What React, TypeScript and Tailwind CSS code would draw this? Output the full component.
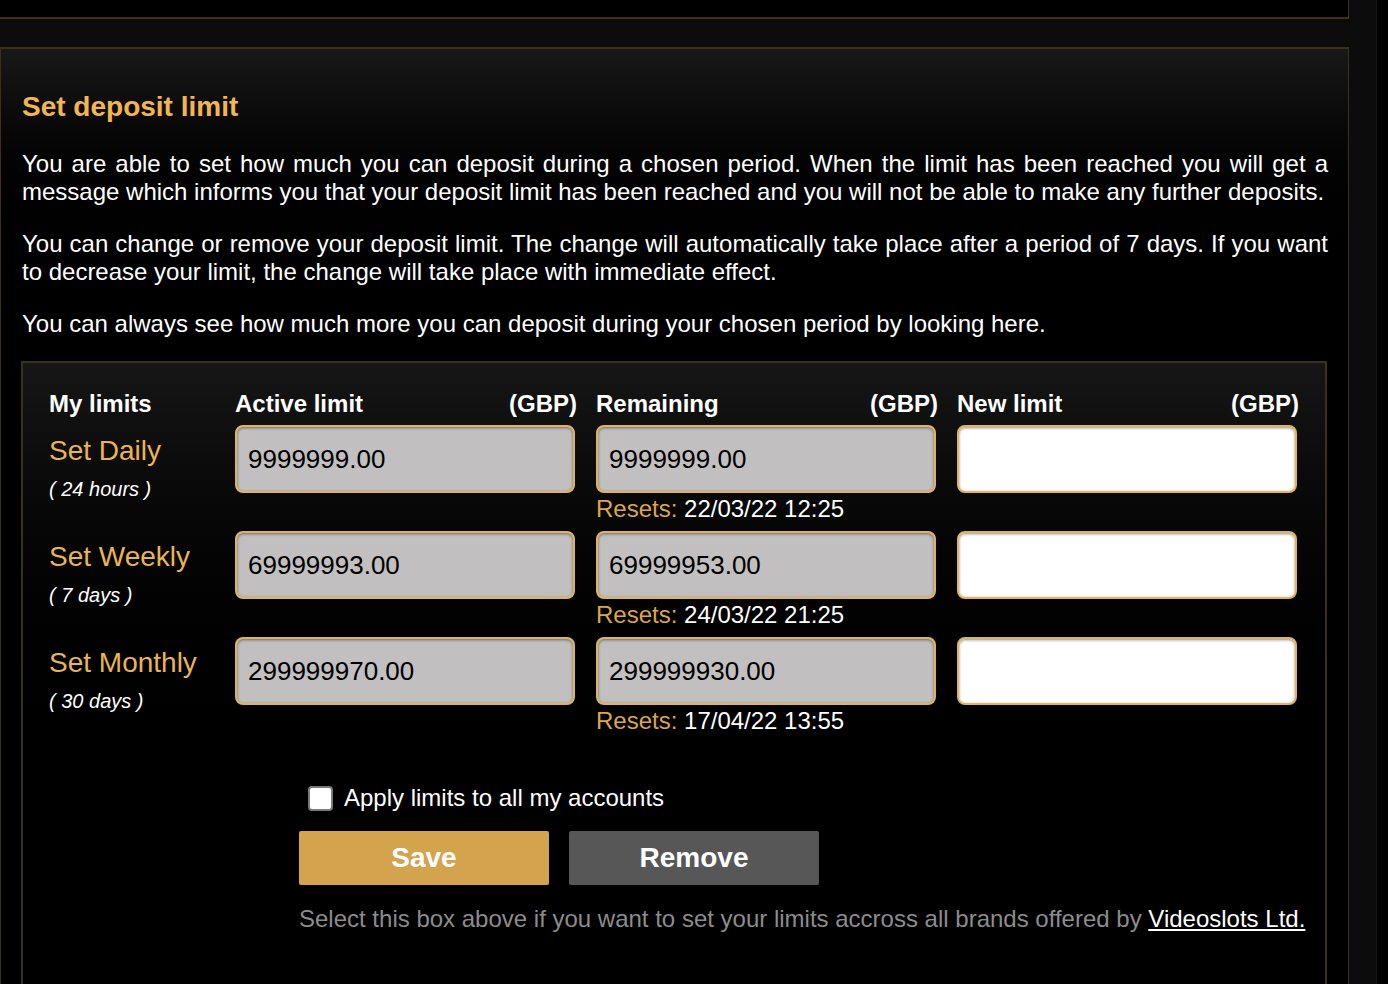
import React from "react";

const rows = [
  { label: "Set Daily", span: "( 24 hours )", active: "9999999.00", remaining: "9999999.00", resets: "22/03/22 12:25" },
  { label: "Set Weekly", span: "( 7 days )", active: "69999993.00", remaining: "69999953.00", resets: "24/03/22 21:25" },
  { label: "Set Monthly", span: "( 30 days )", active: "299999970.00", remaining: "299999930.00", resets: "17/04/22 13:55" },
];

function ReadonlyBox({ value }: { value: string }) {
  return (
    <div className="h-[68px] w-[340px] rounded-[8px] border-2 border-[#e3b455] bg-[#c1bfbf] pl-[11px] flex items-center text-[26px] text-black shadow-[inset_0_1px_3px_rgba(0,0,0,0.45)]">
      {value}
    </div>
  );
}

function EmptyBox() {
  return (
    <div className="h-[68px] w-[340px] rounded-[8px] border-2 border-[#e3b455] bg-white shadow-[inset_0_1px_3px_rgba(0,0,0,0.45)]" />
  );
}

export default function App() {
  return (
    <div className="min-h-screen w-[1388px] bg-[#0c0c0c] font-['Liberation_Sans',Arial,sans-serif] text-white overflow-hidden">
      <div className="flex">
        <div className="w-[1349px]">
          <div className="h-[19px] bg-black border-b-2 border-r border-[#3b3119]" />
          <div className="h-[28px]" />
          <div className="border-t-2 border-r border-l border-[#3b3119] bg-gradient-to-b from-[#181818] to-black to-[220px] h-[937px] pl-[20px] pr-[20px] pt-[40px]">
            <h2 className="text-[28px] font-bold text-[#f2b650] leading-[36px] pl-[1px]">Set deposit limit</h2>
            <div className="mt-[25px] text-[24px] leading-[28px] pl-[1px] space-y-[24px] text-justify">
              <p>
                You are able to set how much you can deposit during a chosen period. When the limit has been reached you will get a message which informs you that your deposit limit has been reached and you will not be able to make any further deposits.
              </p>
              <p>
                You can change or remove your deposit limit. The change will automatically take place after a period of 7 days. If you want to decrease your limit, the change will take place with immediate effect.
              </p>
              <p>You can always see how much more you can deposit during your chosen period by looking here.</p>
            </div>
            <div className="mt-[23px] w-[1306px] h-[640px] border-2 border-[#3b3119] bg-gradient-to-b from-[#161616] to-black to-[420px] pl-[26px] pt-[28px]">
              <div className="grid grid-cols-[165px_340px_340px_340px] gap-x-[21px]">
                <div className="text-[24px] font-bold leading-[26px]">My limits</div>
                {["Active limit", "Remaining", "New limit"].map((h) => (
                  <div key={h} className="flex justify-between text-[24px] font-bold leading-[26px] w-[342px]">
                    <span>{h}</span>
                    <span>(GBP)</span>
                  </div>
                ))}
                {rows.map((r) => (
                  <React.Fragment key={r.label}>
                    <div className="pt-[18px] h-[106px]">
                      <div className="text-[28px] text-[#ebb452] leading-[32px]">{r.label}</div>
                      <div className="text-[20px] italic leading-[24px] mt-[10px]">{r.span}</div>
                    </div>
                    <div className="pt-[8px]">
                      <ReadonlyBox value={r.active} />
                    </div>
                    <div className="pt-[8px]">
                      <ReadonlyBox value={r.remaining} />
                      <div className="text-[24px] leading-[26px] mt-[3px]">
                        <span className="text-[#dca649]">Resets: </span>
                        {r.resets}
                      </div>
                    </div>
                    <div className="pt-[8px]">
                      <EmptyBox />
                    </div>
                  </React.Fragment>
                ))}
              </div>
              <div className="pl-[250px] mt-[49px]">
                <label className="flex items-center pl-[9px] h-[28px]">
                  <span className="w-[25px] h-[25px] rounded-[4px] bg-white border-2 border-[#7a7a7a]" />
                  <span className="ml-[11px] text-[24px]">Apply limits to all my accounts</span>
                </label>
                <div className="flex gap-[20px] mt-[19px]">
                  <button className="w-[250px] h-[54px] rounded-[2px] bg-[#d4a34d] text-[28px] font-bold text-white">Save</button>
                  <button className="w-[250px] h-[54px] rounded-[2px] bg-[#575757] text-[28px] font-bold text-white">Remove</button>
                </div>
                <p className="mt-[20px] text-[24px] leading-[28px] text-[#8c8c8c]">
                  Select this box above if you want to set your limits accross all brands offered by{" "}
                  <a className="text-white underline">Videoslots Ltd.</a>
                </p>
              </div>
            </div>
          </div>
        </div>
        <div className="w-[27px]" />
        <div className="w-[1px] bg-[#1a1710] h-[984px]" />
        <div className="flex-1 bg-black h-[984px]" />
      </div>
    </div>
  );
}
